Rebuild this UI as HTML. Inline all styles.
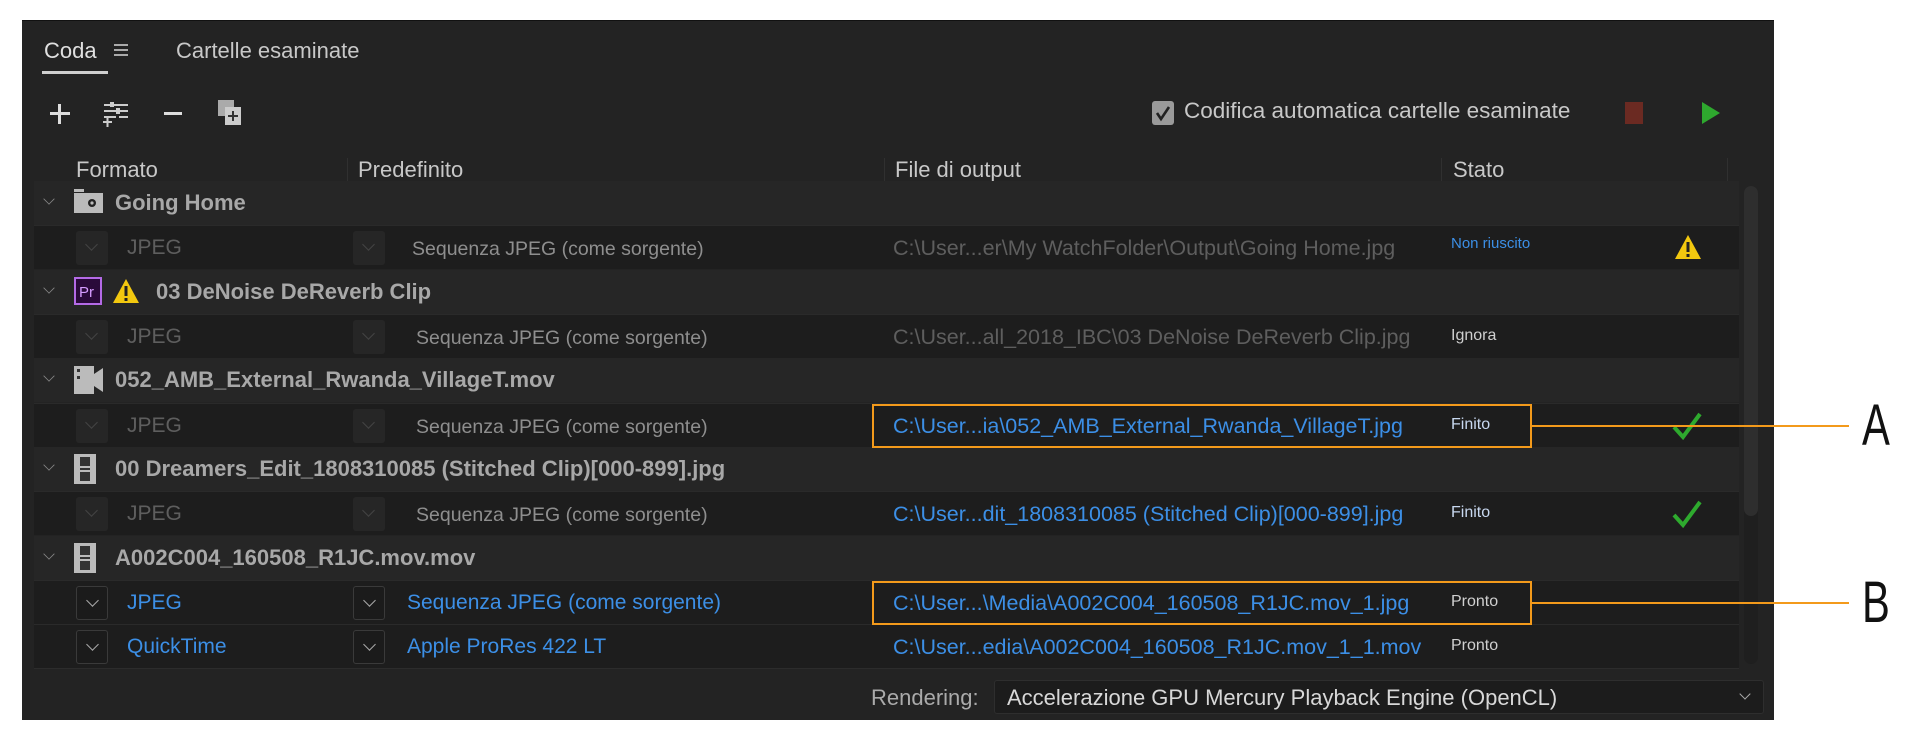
<!DOCTYPE html>
<html><head><meta charset="utf-8"><style>
*{margin:0;padding:0;box-sizing:border-box}
body{width:1920px;height:740px;background:#fff;position:relative;overflow:hidden;font-family:"Liberation Sans",sans-serif}
.a{position:absolute;white-space:nowrap}
#p{position:absolute;left:22px;top:20px;width:1752px;height:700px;background:#232323;border-top:1px solid #111}
.t{color:#c8c8c8;font-size:21px}
.row{position:absolute;left:34px;width:1705px;height:44px}
.g{background:#262626}
.s{background:#1d1d1d;border-top:1px solid #2a2a2a}
.chev{position:absolute;left:10px;top:13px;width:10px;height:10px;border-right:1.5px solid #888;border-bottom:1.5px solid #888;transform:rotate(45deg) scale(.8)}
.gt{position:absolute;left:81px;top:9px;font-size:22px;font-weight:bold;color:#a8a8a8}
.dd{position:absolute;top:5px;width:32px;height:34px;background:#262626;border-radius:3px}
.dd.on{background:#1b1b1b;border:1px solid #3a3a3a}
.dd i{position:absolute;left:11px;top:9px;width:9px;height:9px;border-right:1.5px solid #444;border-bottom:1.5px solid #444;transform:rotate(45deg)}
.dd.on i{border-color:#aaa}
.c1{position:absolute;left:93px;top:10px;font-size:21px}
.c2{position:absolute;left:382px;top:12px;font-size:19.5px}
.c3{position:absolute;left:859px;top:10px;font-size:21.5px}
.c4{position:absolute;left:1417px;top:12px;font-size:16px}
.dim{color:#5e5e5e}
.grey{color:#8e8e8e}
.blue{color:#3c8fe6}
.wh{color:#d0d0d0}
.sep{position:absolute;top:158px;width:1px;height:26px;background:#303030}
.ann{position:absolute;left:872px;width:660px;height:44px;border:2px solid #f39a1b}
.line{position:absolute;left:1531px;width:318px;height:2px;background:#f39a1b}
.L{position:absolute;left:1862px;font-size:58px;color:#111;transform:scaleX(.72);transform-origin:left}
</style></head><body>
<div id="p"></div>
<!-- tabs -->
<div class="a t" style="left:44px;top:38px;color:#e0e0e0;font-size:22px">Coda</div>
<div class="a" style="left:114px;top:44px;width:14px;height:2px;background:#aaa;box-shadow:0 5px 0 #aaa,0 10px 0 #aaa"></div>
<div class="a" style="left:42px;top:71px;width:66px;height:3px;background:#cfcfcf"></div>
<div class="a t" style="left:176px;top:38px;font-size:22px">Cartelle esaminate</div>
<!-- toolbar -->
<div class="a" style="left:50px;top:112px;width:20px;height:3px;background:#ddd"></div>
<div class="a" style="left:58px;top:104px;width:3px;height:20px;background:#ddd"></div>
<svg class="a" style="left:102px;top:101px" width="28" height="26" viewBox="0 0 28 26" fill="#ccc"><rect x="8" y="1" width="4" height="5"/><rect x="2" y="3" width="24" height="2"/><rect x="14" y="7" width="4" height="6"/><rect x="2" y="9" width="24" height="2"/><rect x="2" y="15" width="12" height="2"/><rect x="17" y="15" width="9" height="2"/><rect x="1" y="20" width="9" height="2"/><rect x="4.5" y="17" width="2" height="9"/></svg>
<div class="a" style="left:164px;top:112px;width:18px;height:3px;background:#ddd"></div>
<svg class="a" style="left:217px;top:99px" width="30" height="30" viewBox="0 0 30 30"><rect x="1" y="1" width="16" height="16" fill="#aaa"/><rect x="8" y="8" width="16" height="18" fill="#ccc"/><path d="M16 12v10M11 17h10" stroke="#333" stroke-width="2"/></svg>
<svg class="a" style="left:1152px;top:101px" width="22" height="24" viewBox="0 0 22 24"><rect x="0" y="0" width="22" height="24" rx="3" fill="#9a9a9a"/><path d="M5 12l4 6 8-12" stroke="#222" stroke-width="2.6" fill="none"/></svg>
<div class="a t" style="left:1184px;top:98px;font-size:22.5px">Codifica automatica cartelle esaminate</div>
<div class="a" style="left:1625px;top:102px;width:18px;height:22px;background:#6b2a22"></div>
<svg class="a" style="left:1702px;top:102px" width="18" height="22" viewBox="0 0 18 22"><path d="M0 0L18 11L0 22Z" fill="#2ea82e"/></svg>
<!-- header -->
<div class="a t" style="left:76px;top:157px;font-size:22px">Formato</div>
<div class="a t" style="left:358px;top:157px;font-size:22px">Predefinito</div>
<div class="a t" style="left:895px;top:157px;font-size:22px">File di output</div>
<div class="a t" style="left:1453px;top:157px;font-size:22px">Stato</div>
<div class="sep" style="left:347px"></div><div class="sep" style="left:884px"></div><div class="sep" style="left:1441px"></div><div class="sep" style="left:1727px"></div>
<!-- scrollbar -->
<div class="a" style="left:1744px;top:186px;width:14px;height:478px;background:#1f1f1f;border-radius:7px"></div>
<div class="a" style="left:1744px;top:186px;width:14px;height:330px;background:#2e2e2e;border-radius:7px"></div>

<!-- rows -->
<div class="row g" style="top:181px"><div class="chev"></div>
<svg class="a" style="left:40px;top:8px" width="30" height="24" viewBox="0 0 30 24"><rect x="0" y="0" width="10" height="3" fill="#bbb"/><rect x="0" y="4" width="29" height="20" fill="#bbb"/><circle cx="18" cy="14" r="4" fill="#222"/><circle cx="18" cy="14" r="1.6" fill="#bbb"/></svg>
<div class="gt">Going Home</div></div>
<div class="row s" style="top:225px"><div class="dd" style="left:42px"><i></i></div><div class="c1 dim">JPEG</div><div class="dd" style="left:319px"><i></i></div><div class="c2 grey" style="left:378px">Sequenza JPEG (come sorgente)</div><div class="c3 dim">C:\User...er\My WatchFolder\Output\Going Home.jpg</div><div class="c4 blue" style="top:9px;font-size:15px">Non riuscito</div>
<svg class="a" style="left:1640px;top:8px" width="28" height="26" viewBox="0 0 28 26"><path d="M14 1L27 25H1Z" fill="#f2c80f"/><rect x="12.5" y="8" width="3" height="10" fill="#222"/><rect x="12.5" y="20" width="3" height="3" fill="#222"/></svg></div>
<div class="row g" style="top:270px"><div class="chev"></div>
<svg class="a" style="left:40px;top:7px" width="28" height="28" viewBox="0 0 28 28"><rect x="1" y="1" width="26" height="26" fill="#2a0a3a" stroke="#b46ae6" stroke-width="2"/><text x="5" y="20" font-size="15" fill="#d59cff" font-family="Liberation Sans">Pr</text></svg>
<svg class="a" style="left:78px;top:7px" width="28" height="28" viewBox="0 0 28 26"><path d="M14 1L27 25H1Z" fill="#f2c80f"/><rect x="12.5" y="8" width="3" height="10" fill="#222"/><rect x="12.5" y="20" width="3" height="3" fill="#222"/></svg>
<div class="gt" style="left:122px">03 DeNoise DeReverb Clip</div></div>
<div class="row s" style="top:314px"><div class="dd" style="left:42px"><i></i></div><div class="c1 dim">JPEG</div><div class="dd" style="left:319px"><i></i></div><div class="c2 grey">Sequenza JPEG (come sorgente)</div><div class="c3 dim">C:\User...all_2018_IBC\03 DeNoise DeReverb Clip.jpg</div><div class="c4 wh">Ignora</div></div>
<div class="row g" style="top:358px"><div class="chev"></div>
<svg class="a" style="left:40px;top:8px" width="30" height="28" viewBox="0 0 30 28"><rect x="0" y="0" width="20" height="28" fill="#bbb"/><rect x="3" y="3" width="3" height="3" fill="#333"/><rect x="3" y="10" width="3" height="3" fill="#333"/><path d="M20 8L29 2V26L20 20Z" fill="#bbb"/></svg>
<div class="gt">052_AMB_External_Rwanda_VillageT.mov</div></div>
<div class="row s" style="top:403px"><div class="dd" style="left:42px"><i></i></div><div class="c1 dim">JPEG</div><div class="dd" style="left:319px"><i></i></div><div class="c2 grey">Sequenza JPEG (come sorgente)</div><div class="c3 blue">C:\User...ia\052_AMB_External_Rwanda_VillageT.jpg</div><div class="c4 wh" style="color:#c8d8f0">Finito</div>
<svg class="a" style="left:1638px;top:8px" width="30" height="28" viewBox="0 0 30 28"><path d="M2 15L11 25L28 2" stroke="#2eaa2e" stroke-width="4" fill="none"/></svg></div>
<div class="row g" style="top:447px"><div class="chev"></div>
<svg class="a" style="left:40px;top:7px" width="22" height="30" viewBox="0 0 22 30"><rect width="22" height="30" fill="#bbb"/><rect x="6" y="3" width="10" height="9" fill="#333"/><rect x="6" y="18" width="10" height="9" fill="#333"/><rect x="6" y="14" width="10" height="2" fill="#333"/></svg>
<div class="gt">00 Dreamers_Edit_1808310085 (Stitched Clip)[000-899].jpg</div></div>
<div class="row s" style="top:491px"><div class="dd" style="left:42px"><i></i></div><div class="c1 dim">JPEG</div><div class="dd" style="left:319px"><i></i></div><div class="c2 grey">Sequenza JPEG (come sorgente)</div><div class="c3 blue">C:\User...dit_1808310085 (Stitched Clip)[000-899].jpg</div><div class="c4 wh" style="color:#c8d8f0">Finito</div>
<svg class="a" style="left:1638px;top:8px" width="30" height="28" viewBox="0 0 30 28"><path d="M2 15L11 25L28 2" stroke="#2eaa2e" stroke-width="4" fill="none"/></svg></div>
<div class="row g" style="top:536px"><div class="chev"></div>
<svg class="a" style="left:40px;top:7px" width="22" height="30" viewBox="0 0 22 30"><rect width="22" height="30" fill="#bbb"/><rect x="6" y="3" width="10" height="9" fill="#333"/><rect x="6" y="18" width="10" height="9" fill="#333"/><rect x="6" y="14" width="10" height="2" fill="#333"/></svg>
<div class="gt">A002C004_160508_R1JC.mov.mov</div></div>
<div class="row s" style="top:580px"><div class="dd on" style="left:42px"><i></i></div><div class="c1 blue">JPEG</div><div class="dd on" style="left:319px"><i></i></div><div class="c2 blue" style="left:373px;top:10px;font-size:21px">Sequenza JPEG (come sorgente)</div><div class="c3 blue">C:\User...\Media\A002C004_160508_R1JC.mov_1.jpg</div><div class="c4 wh">Pronto</div></div>
<div class="row s" style="top:624px"><div class="dd on" style="left:42px"><i></i></div><div class="c1 blue">QuickTime</div><div class="dd on" style="left:319px"><i></i></div><div class="c2 blue" style="left:373px;top:10px;font-size:21px">Apple ProRes 422 LT</div><div class="c3 blue">C:\User...edia\A002C004_160508_R1JC.mov_1_1.mov</div><div class="c4 wh">Pronto</div></div>
<div class="a" style="left:34px;top:668px;width:1705px;height:1px;background:#2c2c2c"></div>

<!-- bottom -->
<div class="a t" style="left:871px;top:685px;color:#aaa;font-size:22px">Rendering:</div>
<div class="a" style="left:994px;top:680px;width:770px;height:34px;background:#1c1c1c;border:1px solid #2e2e2e;border-radius:3px"></div>
<div class="a t" style="left:1007px;top:685px;color:#d8d8d8;font-size:22px">Accelerazione GPU Mercury Playback Engine (OpenCL)</div>
<div class="a" style="left:1741px;top:690px;width:8px;height:8px;border-right:1.5px solid #aaa;border-bottom:1.5px solid #aaa;transform:rotate(45deg)"></div>

<!-- annotations -->
<div class="ann" style="top:404px"></div>
<div class="line" style="top:425px"></div>
<div class="L" style="top:392px">A</div>
<div class="ann" style="top:581px"></div>
<div class="line" style="top:602px"></div>
<div class="L" style="top:569px">B</div>
</body></html>
